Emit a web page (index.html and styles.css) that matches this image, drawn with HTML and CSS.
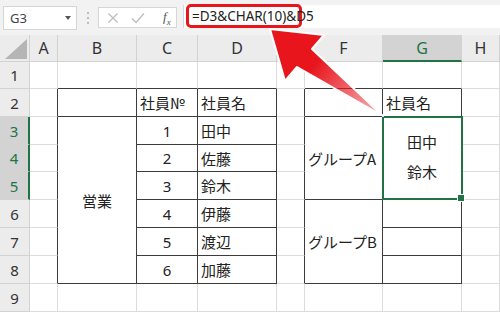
FILE: index.html
```html
<!DOCTYPE html>
<html lang="ja">
<head>
<meta charset="utf-8">
<title>CHAR(10) 改行</title>
<link rel="stylesheet" href="styles.css">
</head>
<body>
<div class="toolbar">
    <div class="namebox">
        <span>G3</span>
        <svg class="namebox-caret" width="6" height="4" viewBox="0 0 6 4"><path d="M0 0H6L3 4Z" fill="#555"/></svg>
    </div>
    <svg class="grip" width="4" height="14" viewBox="0 0 4 14">
        <circle cx="2" cy="2" r="1" fill="#a8a8a8"/>
        <circle cx="2" cy="7" r="1" fill="#a8a8a8"/>
        <circle cx="2" cy="12" r="1" fill="#a8a8a8"/>
    </svg>
    <div class="fx-buttons">
        <svg width="12" height="12" viewBox="0 0 12 12"><path d="M1.5 1.5L10.5 10.5M10.5 1.5L1.5 10.5" stroke="#bdbdbd" stroke-width="1.3"/></svg>
        <svg width="14" height="12" viewBox="0 0 14 12"><path d="M1 6.5L5 10.5L13 1.5" stroke="#bdbdbd" stroke-width="1.3" fill="none"/></svg>
        <span class="fx">f<sub>x</sub></span>
    </div>
    <div class="formula">
        <span class="formula-text">=D3&amp;CHAR(10)&amp;D5</span>
    </div>
</div>

<div class="sheet">
    <!-- header row -->
    <div class="hd corner"><svg width="22" height="20" viewBox="0 0 22 20"><path d="M22 0V20H0Z" fill="#b5b5b5"/></svg></div>
    <div class="hd col">A</div>
    <div class="hd col">B</div>
    <div class="hd col">C</div>
    <div class="hd col">D</div>
    <div class="hd col">E</div>
    <div class="hd col">F</div>
    <div class="hd col sel">G</div>
    <div class="hd col">H</div>

    <!-- row 1 -->
    <div class="hd row">1</div>
    <div class="c"></div>
    <div class="c top"></div>
    <div class="c top"></div>
    <div class="c top"></div>
    <div class="c"></div>
    <div class="c top"></div>
    <div class="c top"></div>
    <div class="c"></div>

    <!-- row 2 -->
    <div class="hd row">2</div>
    <div class="c left"></div>
    <div class="c tb"></div>
    <div class="c tb txt">社員№</div>
    <div class="c tb txt">社員名</div>
    <div class="c left"></div>
    <div class="c tb"></div>
    <div class="c tb txt">社員名</div>
    <div class="c"></div>

    <!-- row 3 -->
    <div class="hd row sel">3</div>
    <div class="c left"></div>
    <div class="c tb mid span6">営業</div>
    <div class="c tb num">1</div>
    <div class="c tb txt">田中</div>
    <div class="c left"></div>
    <div class="c tb txt span3">グループA</div>
    <div class="c tb wrap span3">田中<br>鈴木</div>
    <div class="c"></div>

    <!-- row 4 -->
    <div class="hd row sel">4</div>
    <div class="c left"></div>
    <div class="c tb num">2</div>
    <div class="c tb txt">佐藤</div>
    <div class="c left"></div>
    <div class="c"></div>

    <!-- row 5 -->
    <div class="hd row sel">5</div>
    <div class="c left"></div>
    <div class="c tb num">3</div>
    <div class="c tb txt">鈴木</div>
    <div class="c left"></div>
    <div class="c"></div>

    <!-- row 6 -->
    <div class="hd row">6</div>
    <div class="c left"></div>
    <div class="c tb num">4</div>
    <div class="c tb txt">伊藤</div>
    <div class="c left"></div>
    <div class="c tb txt span3">グループB</div>
    <div class="c tb"></div>
    <div class="c"></div>

    <!-- row 7 -->
    <div class="hd row">7</div>
    <div class="c left"></div>
    <div class="c tb num">5</div>
    <div class="c tb txt">渡辺</div>
    <div class="c left"></div>
    <div class="c tb"></div>
    <div class="c"></div>

    <!-- row 8 -->
    <div class="hd row">8</div>
    <div class="c left"></div>
    <div class="c tb num">6</div>
    <div class="c tb txt">加藤</div>
    <div class="c left"></div>
    <div class="c tb"></div>
    <div class="c"></div>

    <!-- row 9 -->
    <div class="hd row">9</div>
    <div class="c"></div>
    <div class="c"></div>
    <div class="c"></div>
    <div class="c"></div>
    <div class="c"></div>
    <div class="c"></div>
    <div class="c"></div>
    <div class="c"></div>

    <div class="selection"><span class="fill-handle"></span></div>
</div>

<svg class="callout" width="500" height="312" viewBox="0 0 500 312">
    <defs>
        <linearGradient id="fade" gradientUnits="userSpaceOnUse" x1="270" y1="29" x2="383" y2="116">
            <stop offset="0" stop-color="#e8151d"/>
            <stop offset="0.4" stop-color="#e8151d"/>
            <stop offset="1" stop-color="#e8151d" stop-opacity="0.3"/>
        </linearGradient>
    </defs>
    <path d="M270 29 L324 35 L312 49 L383 116 L297 67 L285 81 Z" fill="url(#fade)" stroke="#fff" stroke-width="2" stroke-linejoin="round"/>
</svg>
</body>
</html>
```

FILE: styles.css
```css
html, body {
    margin: 0;
    width: 500px;
    height: 312px;
    overflow: hidden;
    background-color: #fff;
    font-family: "Noto Sans CJK JP", "Noto Sans", sans-serif;
    color: #222;
}

body {
    position: relative;
}

/* formula bar */

.toolbar {
    display: flex;
    align-items: flex-start;
    height: 35px;
    padding-top: 5px;
    box-sizing: border-box;
    background-color: #f2f2f2;
}

.namebox {
    display: flex;
    align-items: center;
    justify-content: space-between;
    margin: 1px 0 0 3px;
    width: 74px;
    height: 24px;
    padding: 0 5px 0 6px;
    box-sizing: border-box;
    background-color: #fff;
    border: 1px solid #d6d6d6;
    font-family: "Noto Sans", sans-serif;
    font-size: 13px;
    color: #444;
}

.grip {
    margin: 6px 0 0 9px;
}

.fx-buttons {
    display: flex;
    align-items: center;
    margin: 2px 0 0 8px;
    width: 79px;
    height: 21px;
    padding: 0 0 0 8px;
    gap: 12px;
    box-sizing: border-box;
    background-color: #fff;
    border: 1px solid #d6d6d6;
}

.fx {
    margin-left: 6px;
    font-family: "Liberation Serif", serif;
    font-style: italic;
    font-size: 13px;
    color: #555;
}

.fx sub {
    font-size: 9px;
}

.formula {
    flex: 1;
    display: flex;
    align-items: center;
    margin-left: 6px;
    height: 23px;
    background-color: #fff;
    border-left: 1px solid #d6d6d6;
}

.formula-text {
    display: flex;
    align-items: center;
    margin: -1px 0 0 2px;
    height: 24px;
    width: 116px;
    padding-left: 3px;
    box-sizing: border-box;
    border: 3px solid #e8151d;
    border-radius: 5px;
    font-family: "Noto Sans", sans-serif;
    font-size: 13.5px;
    color: #222;
    white-space: nowrap;
}

/* sheet grid */

.sheet {
    position: relative;
    display: grid;
    grid-template-columns: 30px 28px 79px 61px 79px 28px 78px 79px 1fr;
    grid-template-rows: 27px 27px 28px 28px 27px 28px 28px 28px 28px 28px;
}

.c, .hd {
    box-sizing: border-box;
    border-right: 1px solid #dcdcdc;
    border-bottom: 1px solid #dcdcdc;
    font-size: 15px;
}

.hd {
    display: flex;
    align-items: center;
    justify-content: center;
    background-color: #ececec;
    border-color: #d2d2d2;
    font-family: "Noto Sans", sans-serif;
    color: #333;
}

.hd.col {
    font-size: 16px;
}

.hd.corner {
    align-items: flex-end;
    justify-content: flex-end;
    padding: 0 2px 2px 0;
}

.hd.sel {
    background-color: #d3d3d3;
    color: #217346;
}

.hd.col.sel {
    border-bottom: 2px solid #217346;
}

.hd.row.sel {
    border-right: 2px solid #217346;
}

.c.top {
    border-bottom-color: #3c3c3c;
}

.c.left {
    border-right-color: #3c3c3c;
}

.c.tb {
    border-right-color: #3c3c3c;
    border-bottom-color: #3c3c3c;
}

.txt {
    display: flex;
    align-items: center;
    padding-left: 3px;
    white-space: nowrap;
}

.num {
    display: flex;
    align-items: center;
    justify-content: center;
    font-family: "Noto Sans", sans-serif;
}

.mid {
    display: flex;
    align-items: center;
    justify-content: center;
}

.wrap {
    display: flex;
    align-items: center;
    justify-content: center;
    text-align: center;
    line-height: 30px;
    padding-bottom: 2px;
}

.span6 {
    grid-row: span 6;
}

.span3 {
    grid-row: span 3;
}

/* active cell G3 (merged G3:G5) */

.selection {
    position: absolute;
    left: 382px;
    top: 81px;
    width: 81px;
    height: 84px;
    box-sizing: border-box;
    border: 2px solid #217346;
    pointer-events: none;
}

.fill-handle {
    position: absolute;
    right: -4px;
    bottom: -4px;
    width: 6px;
    height: 6px;
    background-color: #217346;
    border: 1px solid #fff;
}

.callout {
    position: absolute;
    left: 0;
    top: 0;
}
```
